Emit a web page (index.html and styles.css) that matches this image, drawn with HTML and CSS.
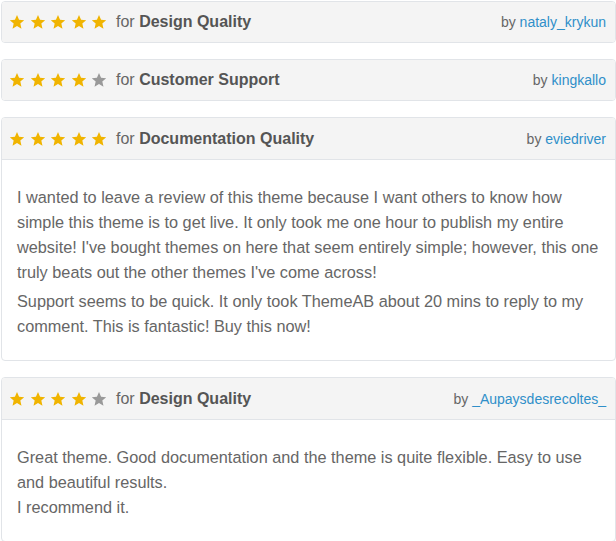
FILE: index.html
```html
<!DOCTYPE html>
<html>
<head>
<meta charset="utf-8">
<link rel="stylesheet" href="styles.css">
</head>
<body>
<svg width="0" height="0" class="defs">
  <defs>
    <symbol id="star" viewBox="0 0 24 24">
      <polygon points="12,1.5 15.1,8.6 22.8,9.3 17,14.4 18.7,22 12,18 5.3,22 7,14.4 1.2,9.3 8.9,8.6"/>
    </symbol>
  </defs>
</svg>
<div class="list">
  <div class="card">
    <div class="head">
      <div class="rating">
        <span class="stars">
          <svg class="star on"><use href="#star"/></svg><svg class="star on"><use href="#star"/></svg><svg class="star on"><use href="#star"/></svg><svg class="star on"><use href="#star"/></svg><svg class="star on"><use href="#star"/></svg>
        </span>
        <span class="for">for <b>Design Quality</b></span>
      </div>
      <div class="by">by <a href="#">nataly_krykun</a></div>
    </div>
  </div>
  <div class="card">
    <div class="head">
      <div class="rating">
        <span class="stars">
          <svg class="star on"><use href="#star"/></svg><svg class="star on"><use href="#star"/></svg><svg class="star on"><use href="#star"/></svg><svg class="star on"><use href="#star"/></svg><svg class="star off"><use href="#star"/></svg>
        </span>
        <span class="for">for <b>Customer Support</b></span>
      </div>
      <div class="by">by <a href="#">kingkallo</a></div>
    </div>
  </div>
  <div class="card">
    <div class="head bordered">
      <div class="rating">
        <span class="stars">
          <svg class="star on"><use href="#star"/></svg><svg class="star on"><use href="#star"/></svg><svg class="star on"><use href="#star"/></svg><svg class="star on"><use href="#star"/></svg><svg class="star on"><use href="#star"/></svg>
        </span>
        <span class="for">for <b>Documentation Quality</b></span>
      </div>
      <div class="by">by <a href="#">eviedriver</a></div>
    </div>
    <div class="body">
      <p>I wanted to leave a review of this theme because I want others to know how simple this theme is to get live. It only took me one hour to publish my entire website! I've bought themes on here that seem entirely simple; however, this one truly beats out the other themes I've come across!</p>
      <p>Support seems to be quick. It only took ThemeAB about 20 mins to reply to my comment. This is fantastic! Buy this now!</p>
    </div>
  </div>
  <div class="card">
    <div class="head bordered">
      <div class="rating">
        <span class="stars">
          <svg class="star on"><use href="#star"/></svg><svg class="star on"><use href="#star"/></svg><svg class="star on"><use href="#star"/></svg><svg class="star on"><use href="#star"/></svg><svg class="star off"><use href="#star"/></svg>
        </span>
        <span class="for">for <b>Design Quality</b></span>
      </div>
      <div class="by">by <a href="#">_Aupaysdesrecoltes_</a></div>
    </div>
    <div class="body">
      <p>Great theme. Good documentation and the theme is quite flexible. Easy to use and beautiful results.<br>I recommend it.</p>
    </div>
  </div>
</div>
</body>
</html>
```
FILE: styles.css
```css
html, body {
  margin: 0;
  padding: 0;
  background: #fff;
}
body {
  font-family: "Liberation Sans", Arial, sans-serif;
  color: #666;
}
.defs {
  position: absolute;
  width: 0;
  height: 0;
}
.list {
  display: flex;
  flex-direction: column;
  gap: 16px;
  padding: 1px 0 0 1px;
}
.card {
  border: 1px solid #e1e4e8;
  border-radius: 4px;
  overflow: hidden;
  background: #fff;
}
.head {
  height: 40px;
  background: #f4f4f4;
  display: flex;
  align-items: center;
  justify-content: space-between;
  padding: 0 9px 0 7px;
}
.head.bordered {
  height: 41px;
  border-bottom: 1px solid #e1e4e8;
}
.rating {
  display: flex;
  align-items: center;
}
.stars {
  display: flex;
  gap: 4.5px;
  margin-right: 9px;
}
.star {
  width: 16px;
  height: 16px;
  display: block;
}
.star.on { fill: #f0b400; }
.star.off { fill: #999; }
.for {
  font-size: 16px;
  color: #666;
}
.for b {
  font-weight: bold;
  color: #555;
}
.by {
  font-size: 14px;
  color: #666;
}
.by a {
  color: #2f8fc9;
  text-decoration: none;
}
.body {
  padding: 25px 12px 21px 15px;
}
.body p {
  margin: 0;
  font-size: 16.3px;
  line-height: 25px;
  color: #666;
}
.body p + p {
  margin-top: 4px;
}
```
